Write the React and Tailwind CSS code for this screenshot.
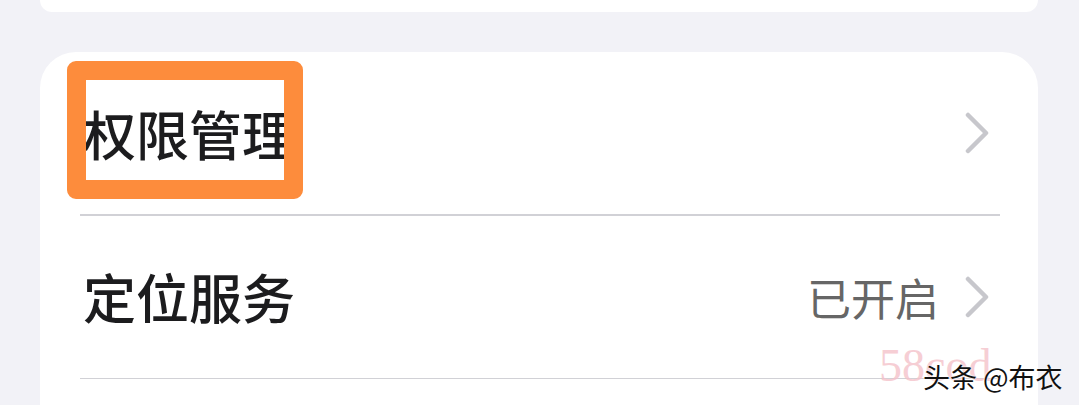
import React from "react";

const CJK = "font-['Noto_Sans_CJK_SC','Noto_Sans',sans-serif]";

function Chevron() {
  return (
    <svg width="26" height="42" viewBox="0 0 26 42" fill="none">
      <path
        d="M4 3 L22 21 L4 39"
        stroke="#c7c7cc"
        strokeWidth="4.5"
        strokeLinecap="round"
        strokeLinejoin="round"
      />
    </svg>
  );
}

function Row({ title, value }) {
  return (
    <div className="h-[162px] flex items-center justify-between pl-[43px] pr-[48px]">
      <span className="text-[53px] font-medium text-[#1c1c1e] leading-none">
        {title}
      </span>
      <div className="flex items-center gap-[25px]">
        {value && (
          <span className="text-[44px] text-[#666666] leading-none">{value}</span>
        )}
        <Chevron />
      </div>
    </div>
  );
}

export default function App() {
  return (
    <div
      className={`relative w-[1079px] h-[405px] overflow-hidden bg-[#f2f2f7] px-[40px] ${CJK}`}
    >
      {/* previous card */}
      <div className="w-[998px] h-[12px] bg-white rounded-b-[36px]" />

      {/* settings card */}
      <div className="relative mt-[40px] w-[998px] bg-white rounded-t-[36px]">
        <Row title="权限管理" />
        <div className="ml-[40px] mr-[38px] h-[1.5px] bg-[#d1d1d6]" />
        <Row title="定位服务" value="已开启" />
        <div className="ml-[40px] mr-[38px] h-[1.5px] bg-[#d1d1d6]" />
        <div className="h-[40px]" />

        {/* highlight frame */}
        <div className="absolute left-[27px] top-[9px] w-[236px] h-[138px] border-[19px] border-[#fd8c3c] rounded-[9px]" />
      </div>

      {/* watermark */}
      <div className="absolute left-[879px] top-[343px] text-[46px] leading-none text-[#f5c2ca] opacity-80 font-['Liberation_Serif',serif]">
        58cod
      </div>
      <div className="absolute left-[923px] top-[363px] text-[27px] leading-none text-[#111] [text-shadow:0_0_2px_#fff,0_0_2px_#fff]">
        头条 @布衣
      </div>
    </div>
  );
}
